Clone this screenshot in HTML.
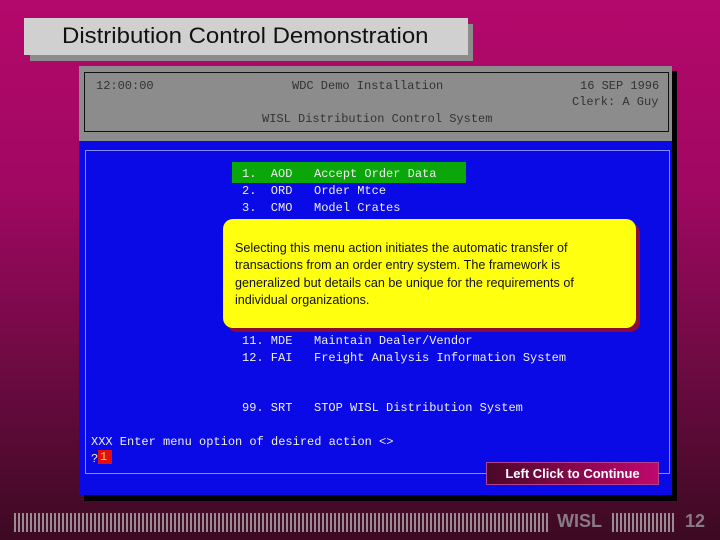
<!DOCTYPE html>
<html><head><style>
*{margin:0;padding:0}
body{width:720px;height:540px;overflow:hidden;position:relative;background:linear-gradient(#b4086c 0%,#a00862 35%,#6a0a40 70%,#3c0a22 100%);font-family:"Liberation Sans",sans-serif}
.a{position:absolute}
.m{font-family:"Liberation Mono",monospace;font-size:12px;white-space:pre;position:absolute}
</style></head><body>
<div class="a" style="left:30px;top:24px;width:443px;height:37px;background:#8c8c8c"></div>
<div class="a" style="left:24px;top:18px;width:444px;height:37px;background:#d0d0d0"></div>
<div class="a" style="left:62px;top:23px;font-size:22px;color:#111;transform:scaleX(1.09);transform-origin:0 0">Distribution Control Demonstration</div>

<div class="a" style="left:84px;top:71px;width:593px;height:430px;background:#000"></div>
<div class="a" style="left:79px;top:66px;width:593px;height:75px;background:#8c8c8c"></div>
<div class="a" style="left:84px;top:72px;width:583px;height:58px;border:1px solid #111"></div>
<div class="a" style="left:79px;top:141px;width:593px;height:354px;background:#0a0ae6"></div>
<div class="a" style="left:85px;top:150px;width:583px;height:322px;border:1px solid #8a8aff"></div>

<div class="m" style="left:96px;top:79px;color:#333">12:00:00</div>
<div class="m" style="left:292px;top:79px;color:#333">WDC Demo Installation</div>
<div class="m" style="left:580px;top:79px;color:#333">16 SEP 1996</div>
<div class="m" style="left:572px;top:95px;color:#333">Clerk: A Guy</div>
<div class="m" style="left:262px;top:112px;color:#333">WISL Distribution Control System</div>

<div class="a" style="left:232px;top:162px;width:234px;height:21px;background:#0aa60a"></div>
<div class="m" style="left:242px;top:167px;color:#eee">1.  AOD   Accept Order Data</div>
<div class="m" style="left:242px;top:184px;color:#eee">2.  ORD   Order Mtce</div>
<div class="m" style="left:242px;top:201px;color:#eee">3.  CMO   Model Crates</div>
<div class="m" style="left:242px;top:334px;color:#eee">11. MDE   Maintain Dealer/Vendor</div>
<div class="m" style="left:242px;top:351px;color:#eee">12. FAI   Freight Analysis Information System</div>
<div class="m" style="left:242px;top:401px;color:#eee">99. SRT   STOP WISL Distribution System</div>
<div class="m" style="left:91px;top:435px;color:#eee">XXX Enter menu option of desired action &lt;&gt;</div>
<div class="m" style="left:91px;top:452px;color:#eee">?</div>
<div class="a" style="left:98px;top:450px;width:14px;height:14px;background:#e01010"></div>
<div class="m" style="left:100px;top:450px;color:#ffd040">1</div>

<div class="a" style="left:227px;top:223px;width:413px;height:109px;border-radius:10px;background:#8a0a3a"></div>
<div class="a" style="left:223px;top:219px;width:413px;height:109px;border-radius:10px;background:#ffff10"></div>
<div class="a" style="left:235px;top:240px;width:385px;font-size:12.6px;line-height:17.3px;color:#111">Selecting this menu action initiates the automatic transfer of transactions from an order entry system. The framework is generalized but details can be unique for the requirements of individual organizations.</div>

<div class="a" style="left:486px;top:462px;width:171px;height:21px;border:1px solid #b04090;background:linear-gradient(90deg,#4a0828,#c0086e);color:#fff;font-size:13px;font-weight:bold;text-align:center;line-height:21px">Left Click to Continue</div>

<div class="a" style="left:14px;top:513px;width:534px;height:19px;background:repeating-linear-gradient(90deg,#9a8a92 0 2px,transparent 2px 4px)"></div>
<div class="a" style="left:557px;top:511px;font-size:18px;font-weight:bold;color:#8a7a84">WISL</div>
<div class="a" style="left:612px;top:513px;width:63px;height:19px;background:repeating-linear-gradient(90deg,#9a8a92 0 2px,transparent 2px 4px)"></div>
<div class="a" style="left:685px;top:511px;font-size:18px;font-weight:bold;color:#8a7a84">12</div>
</body></html>
